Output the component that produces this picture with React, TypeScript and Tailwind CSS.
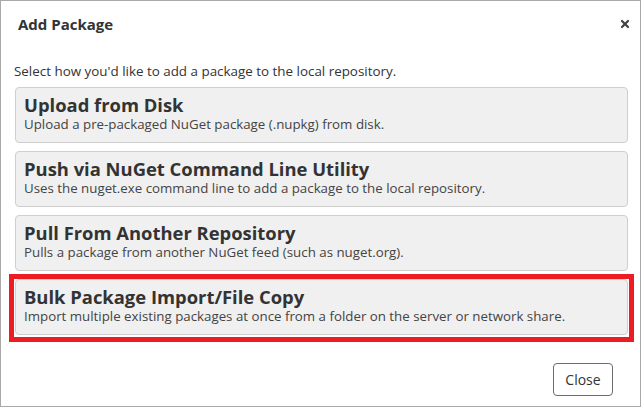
import { X } from "lucide-react";

const options = [
  {
    title: "Upload from Disk",
    desc: "Upload a pre-packaged NuGet package (.nupkg) from disk.",
  },
  {
    title: "Push via NuGet Command Line Utility",
    desc: "Uses the nuget.exe command line to add a package to the local repository.",
  },
  {
    title: "Pull From Another Repository",
    desc: "Pulls a package from another NuGet feed (such as nuget.org).",
  },
  {
    title: "Bulk Package Import/File Copy",
    desc: "Import multiple existing packages at once from a folder on the server or network share.",
  },
];

export default function App() {
  return (
    <div className="w-[642px] h-[408px] bg-white font-['Open_Sans',sans-serif] text-[#333]">
      <div className="relative flex h-[407px] w-[641px] flex-col border border-[#a9a9a9]">
        {/* Header */}
        <div className="flex h-[46px] items-center justify-between pl-[17px] pr-[9px]">
          <h2 className="text-[15px] font-bold text-[#333]">Add Package</h2>
          <X className="h-[12px] w-[12px] text-[#444]" strokeWidth={4.5} />
        </div>

        {/* Body */}
        <div className="px-[13px] pt-[14px]">
          <p className="text-[13.4px] leading-[20px] text-[#333]">
            Select how you'd like to add a package to the local repository.
          </p>
          <div className="mt-[6px] flex flex-col gap-[8px] pl-[1px]">
            {options.map((o) => (
              <div
                key={o.title}
                className="flex h-[56px] w-[613px] flex-col justify-center rounded-[4px] border border-[#cfcfcf] bg-[#f0f0f0] px-[8px] pb-[3px]"
              >
                <div className="text-[18.4px] font-bold leading-[22px] text-[#333]">
                  {o.title}
                </div>
                <div className="text-[13.3px] leading-[17px] text-[#444]">
                  {o.desc}
                </div>
              </div>
            ))}
          </div>
        </div>

        {/* Footer */}
        <div className="mt-auto flex justify-end pb-[10px] pr-[27px]">
          <button className="h-[33px] w-[60px] rounded-[4px] border border-[#6c6c6c] bg-white text-[14px] text-[#333]">
            Close
          </button>
        </div>

        {/* highlight annotation */}
        <div className="pointer-events-none absolute left-[8px] top-[273px] h-[68px] w-[625px] border-[5px] border-[#ed1c24]" />
      </div>
    </div>
  );
}
